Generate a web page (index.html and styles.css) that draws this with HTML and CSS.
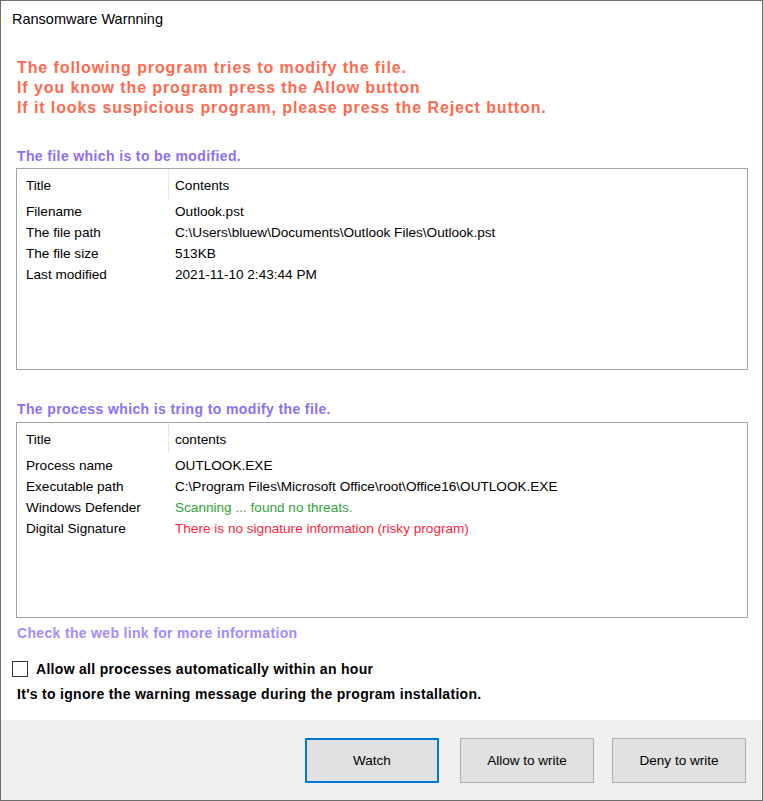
FILE: index.html
```html
<!DOCTYPE html>
<html>
<head>
<meta charset="utf-8">
<link rel="stylesheet" href="styles.css">
</head>
<body>
<div class="window">
  <div class="titlebar">Ransomware Warnning</div>
  <div class="content">
    <div class="warning">
      <div>The following program tries to modify the file.</div>
      <div>If you know the program press the Allow button</div>
      <div>If it looks suspicious program, please press the Reject button.</div>
    </div>
    <div class="heading h1">The file which is to be modified.</div>
    <div class="listbox box1">
      <div class="row head"><div class="c1">Title</div><div class="c2">Contents</div></div>
      <div class="row"><div class="c1">Filename</div><div class="c2">Outlook.pst</div></div>
      <div class="row"><div class="c1">The file path</div><div class="c2">C:\Users\bluew\Documents\Outlook Files\Outlook.pst</div></div>
      <div class="row"><div class="c1">The file size</div><div class="c2">513KB</div></div>
      <div class="row"><div class="c1">Last modified</div><div class="c2">2021-11-10 2:43:44 PM</div></div>
    </div>
    <div class="heading h2">The process which is tring to modify the file.</div>
    <div class="listbox box2">
      <div class="row head"><div class="c1">Title</div><div class="c2">contents</div></div>
      <div class="row"><div class="c1">Process name</div><div class="c2">OUTLOOK.EXE</div></div>
      <div class="row"><div class="c1">Executable path</div><div class="c2">C:\Program Files\Microsoft Office\root\Office16\OUTLOOK.EXE</div></div>
      <div class="row"><div class="c1">Windows Defender</div><div class="c2 green">Scanning ... found no threats.</div></div>
      <div class="row"><div class="c1">Digital Signature</div><div class="c2 red">There is no signature information (risky program)</div></div>
    </div>
    <div class="link">Check the web link for more information</div>
    <label class="check"><span class="box"></span><span>Allow all processes automatically within an hour</span></label>
    <div class="hint">It's to ignore the warning message during the program installation.</div>
  </div>
  <div class="footer">
    <button class="btn default">Watch</button>
    <button class="btn allow">Allow to write</button>
    <button class="btn">Deny to write</button>
  </div>
</div>
</body>
</html>
```
FILE: styles.css
```css
html, body {
  margin: 0;
  padding: 0;
  background: #ffffff;
}
body {
  font-family: "Liberation Sans", Arial, sans-serif;
  color: #000;
}
.window {
  width: 763px;
  height: 801px;
  box-sizing: border-box;
  border: 1px solid #6e6e6e;
  background: #fff;
  display: flex;
  flex-direction: column;
}
.titlebar {
  height: 37px;
  padding-left: 11px;
  font-size: 14.5px;
  line-height: 37px;
  color: #000;
  flex: none;
}
.content {
  flex: 1;
  padding: 0 14px 0 15px;
  display: flex;
  flex-direction: column;
}
.warning {
  margin-top: 20px;
  padding-left: 1px;
  color: #ff6a4f;
  font-weight: bold;
  font-size: 16px;
  line-height: 20px;
  letter-spacing: 0.9px;
}
.heading {
  font-weight: bold;
  font-size: 14px;
  line-height: 20px;
  color: #8c6ff2;
  padding-left: 1px;
  letter-spacing: 0.38px;
}
.h1 { margin-top: 28px; }
.h2 { margin-top: 29px; }
.listbox {
  border: 1px solid #a3a3a8;
  box-sizing: border-box;
  font-size: 13.6px;
  margin-top: 2px;
}
.box1 { height: 202px; }
.box2 { height: 196px; margin-top: 3px; }
.row {
  display: flex;
  height: 21px;
  line-height: 21px;
}
.row.head {
  height: 32px;
  line-height: 33px;
}
.c1 {
  width: 142px;
  padding-left: 9px;
  flex: none;
}
.head .c1 {
  border-right: 1px solid #e6e6e6;
  height: 30px;
}
.c2 {
  padding-left: 6px;
}
.row:not(.head) .c2 { padding-left: 7px; }
.green { color: #35a23a; }
.red { color: #ff1f3d; }
.link {
  margin-top: 5px;
  padding-left: 1px;
  font-weight: bold;
  font-size: 14px;
  line-height: 20px;
  color: #a58bff;
  letter-spacing: 0.33px;
}
.check {
  margin-top: 16px;
  margin-left: -4px;
  display: flex;
  align-items: center;
  gap: 8px;
  font-weight: bold;
  font-size: 14px;
  line-height: 20px;
  letter-spacing: 0.3px;
}
.box {
  width: 14px;
  height: 14px;
  border: 1px solid #333;
  background: #fff;
  flex: none;
}
.hint {
  margin-top: 5px;
  padding-left: 1px;
  font-weight: bold;
  font-size: 14px;
  line-height: 20px;
  letter-spacing: 0.3px;
}
.footer {
  height: 80px;
  flex: none;
  background: #f0f0f0;
  display: flex;
  justify-content: flex-end;
  align-items: flex-start;
  padding: 18px 16px 0 0;
  box-sizing: border-box;
}
.btn {
  width: 134px;
  height: 45px;
  background: #e1e1e1;
  border: 1px solid #adadad;
  font-family: "Liberation Sans", Arial, sans-serif;
  font-size: 13.5px;
  color: #000;
  padding: 0;
  margin: 0;
}
.btn.default {
  border: 2px solid #0078d7;
  margin-right: 21px;
}
.btn.allow {
  margin-right: 18px;
}
```
